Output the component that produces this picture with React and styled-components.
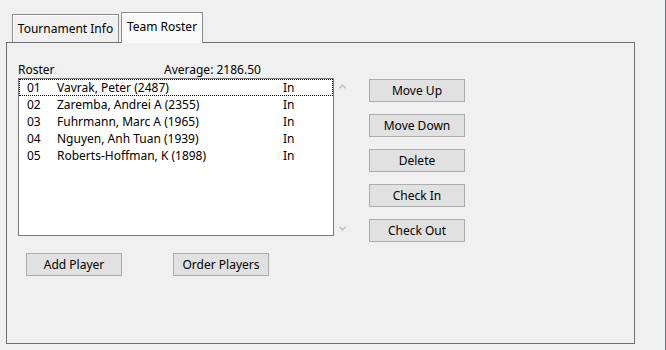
import React from 'react';
import styled, { createGlobalStyle } from 'styled-components';

const GlobalStyle = createGlobalStyle`
  html, body {
    margin: 0;
    padding: 0;
    background: #f0f0f0;
  }
  body {
    font-family: "Noto Sans", "Segoe UI", sans-serif;
    font-size: 12px;
    color: #000;
  }
`;

const Window = styled.div`
  width: 666px;
  height: 350px;
  box-sizing: border-box;
  padding: 12px 0 0 6px;
  border-right: 1px solid #6e757c;
  background: #f0f0f0;
  overflow: hidden;
`;

const TabStrip = styled.div`
  display: flex;
  align-items: flex-end;
  gap: 2px;
  height: 31px;
  padding-left: 6px;
  margin-bottom: -1px;
`;

const Tab = styled.div`
  box-sizing: border-box;
  width: ${p => p.$width}px;
  height: ${p => (p.$active ? 31 : 28)}px;
  margin-bottom: ${p => (p.$active ? 0 : 1)}px;
  border: 1px solid #8c8c8c;
  border-bottom: none;
  box-shadow: inset 1px 1px 0 #fff;
  background: ${p => (p.$active ? '#f9f9f9' : '#f0f0f0')};
  line-height: 27px;
  text-align: center;
  position: ${p => (p.$active ? 'relative' : 'static')};
  z-index: ${p => (p.$active ? 1 : 'auto')};
`;

const Pane = styled.div`
  box-sizing: border-box;
  width: 629px;
  height: 302px;
  border: 1px solid #707070;
  padding: 18px 0 0 11px;
`;

const LabelRow = styled.div`
  display: grid;
  grid-template-columns: 146px auto;
  width: 316px;
  line-height: 17px;
`;

const Body = styled.div`
  display: flex;
  align-items: flex-start;
`;

const ListBox = styled.div`
  box-sizing: border-box;
  width: 316px;
  height: 158px;
  border: 1px solid #7a7a7a;
  background: #fff;
`;

const Row = styled.div`
  display: grid;
  grid-template-columns: 30px 226px auto;
  height: 17px;
  line-height: 17px;
  padding-left: 8px;
  outline: ${p => (p.$focused ? '1px dotted #000' : 'none')};
  outline-offset: -1px;
`;

const Arrows = styled.div`
  box-sizing: border-box;
  display: flex;
  flex-direction: column;
  justify-content: space-between;
  width: 7px;
  height: 158px;
  margin-left: 5px;
  padding: 6px 0 5px;
`;

const ButtonColumn = styled.div`
  display: flex;
  flex-direction: column;
  gap: 12px;
  margin: 1px 0 0 23px;
`;

const Button = styled.button`
  box-sizing: border-box;
  width: 96px;
  height: 23px;
  padding: 0;
  border: 1px solid #adadad;
  background: #e1e1e1;
  font: inherit;
  color: #000;
  line-height: 20px;
`;

const BottomRow = styled.div`
  display: flex;
  gap: 51px;
  margin: 11px 0 0 8px;
`;

const Chevron = ({ down }) => (
  <svg width="7" height="5" viewBox="0 0 7 5">
    <polyline
      points={down ? '0.5,0.8 3.5,3.8 6.5,0.8' : '0.5,4.2 3.5,1.2 6.5,4.2'}
      fill="none"
      stroke="#c4c4c4"
      strokeWidth="1.6"
    />
  </svg>
);

const players = [
  ['01', 'Vavrak, Peter (2487)', 'In'],
  ['02', 'Zaremba, Andrei A (2355)', 'In'],
  ['03', 'Fuhrmann, Marc A (1965)', 'In'],
  ['04', 'Nguyen, Anh Tuan (1939)', 'In'],
  ['05', 'Roberts-Hoffman, K (1898)', 'In'],
];

export default function App() {
  return (
    <>
      <GlobalStyle />
      <Window>
        <TabStrip>
          <Tab $width={107}>Tournament Info</Tab>
          <Tab $width={82} $active>Team Roster</Tab>
        </TabStrip>
        <Pane>
          <LabelRow>
            <span>Roster</span>
            <span>Average: 2186.50</span>
          </LabelRow>
          <Body>
            <ListBox>
              {players.map(([num, name, status], i) => (
                <Row key={num} $focused={i === 0}>
                  <span>{num}</span>
                  <span>{name}</span>
                  <span>{status}</span>
                </Row>
              ))}
            </ListBox>
            <Arrows>
              <Chevron />
              <Chevron down />
            </Arrows>
            <ButtonColumn>
              <Button>Move Up</Button>
              <Button>Move Down</Button>
              <Button>Delete</Button>
              <Button>Check In</Button>
              <Button>Check Out</Button>
            </ButtonColumn>
          </Body>
          <BottomRow>
            <Button>Add Player</Button>
            <Button>Order Players</Button>
          </BottomRow>
        </Pane>
      </Window>
    </>
  );
}
